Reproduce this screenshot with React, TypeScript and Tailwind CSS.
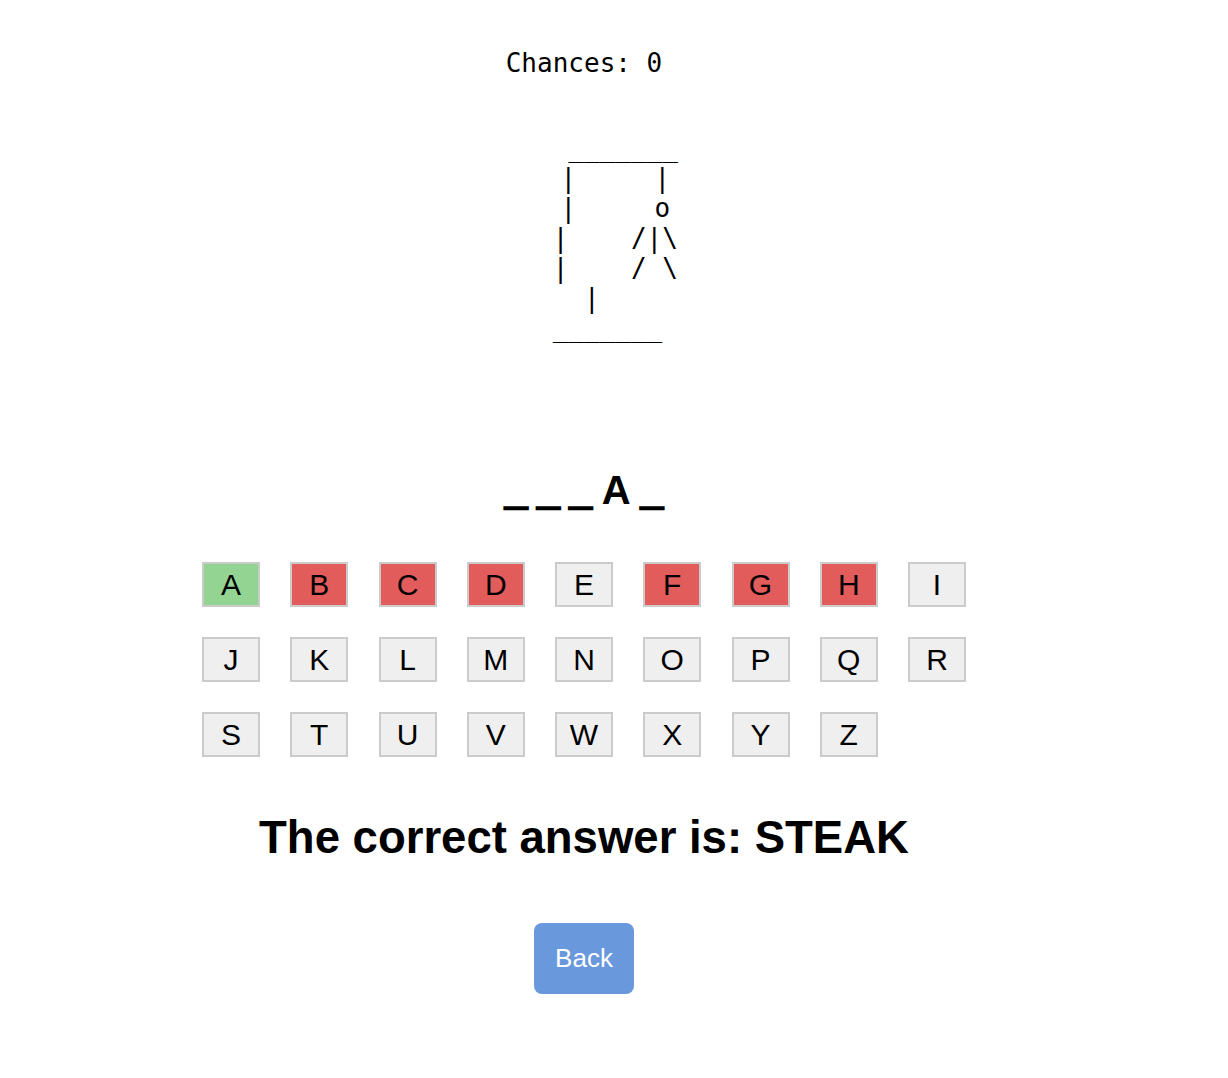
import React from 'react';

const letters = 'ABCDEFGHIJKLMNOPQRSTUVWXYZ'.split('');
const correct = ['A'];
const wrong = ['B', 'C', 'D', 'F', 'G', 'H'];

const gallows = [
  '     _______',
  '    |     |',
  '    |     o',
  '    |    /|\\',
  '    |    / \\',
  '    |   ',
  '    _______ ',
].join('\n');

const App = () => {
  const word = '___A_';

  return (
    <div className="w-[1168px] flex flex-col items-center pt-[48px] pb-[80px] bg-white text-black">
      <p className="font-['DejaVu_Sans_Mono',monospace] text-[26px] leading-[30px]">Chances: 0</p>

      <pre className="mt-[54.5px] font-['DejaVu_Sans_Mono',monospace] text-[26px] leading-[30px] text-center">
        {gallows}
      </pre>

      <div className="mt-[124px] font-['Liberation_Sans',Arial,sans-serif] font-bold text-[40px] leading-[46px] tracking-[10px] pl-[10px]">
        {word.split('').map((ch, i) => (
          <span key={i} className={ch === '_' ? '[-webkit-text-stroke:2.5px_black]' : ''}>
            {ch}
          </span>
        ))}
      </div>

      <div className="mt-[49.5px] grid grid-cols-9 gap-x-[30.25px] gap-y-[30px]">
        {letters.map((l) => {
          const bg = correct.includes(l)
            ? 'bg-[#93d493]'
            : wrong.includes(l)
            ? 'bg-[#e25c5c]'
            : 'bg-[#efefef]';
          return (
            <button
              key={l}
              className={`w-[58px] h-[45px] border-2 border-[#cbcbcb] ${bg} flex items-center justify-center font-['Liberation_Sans',Arial,sans-serif] text-[30px] leading-none text-black`}
            >
              {l}
            </button>
          );
        })}
      </div>

      <h2 className="mt-[54px] font-['Liberation_Sans',Arial,sans-serif] font-bold text-[45.5px] leading-[53px]">
        The correct answer is: STEAK
      </h2>

      <button className="mt-[58.5px] w-[100px] h-[71px] rounded-[8px] bg-[#6a98dc] text-white font-['Liberation_Sans',Arial,sans-serif] text-[26px]">
        Back
      </button>
    </div>
  );
};

export default App;
